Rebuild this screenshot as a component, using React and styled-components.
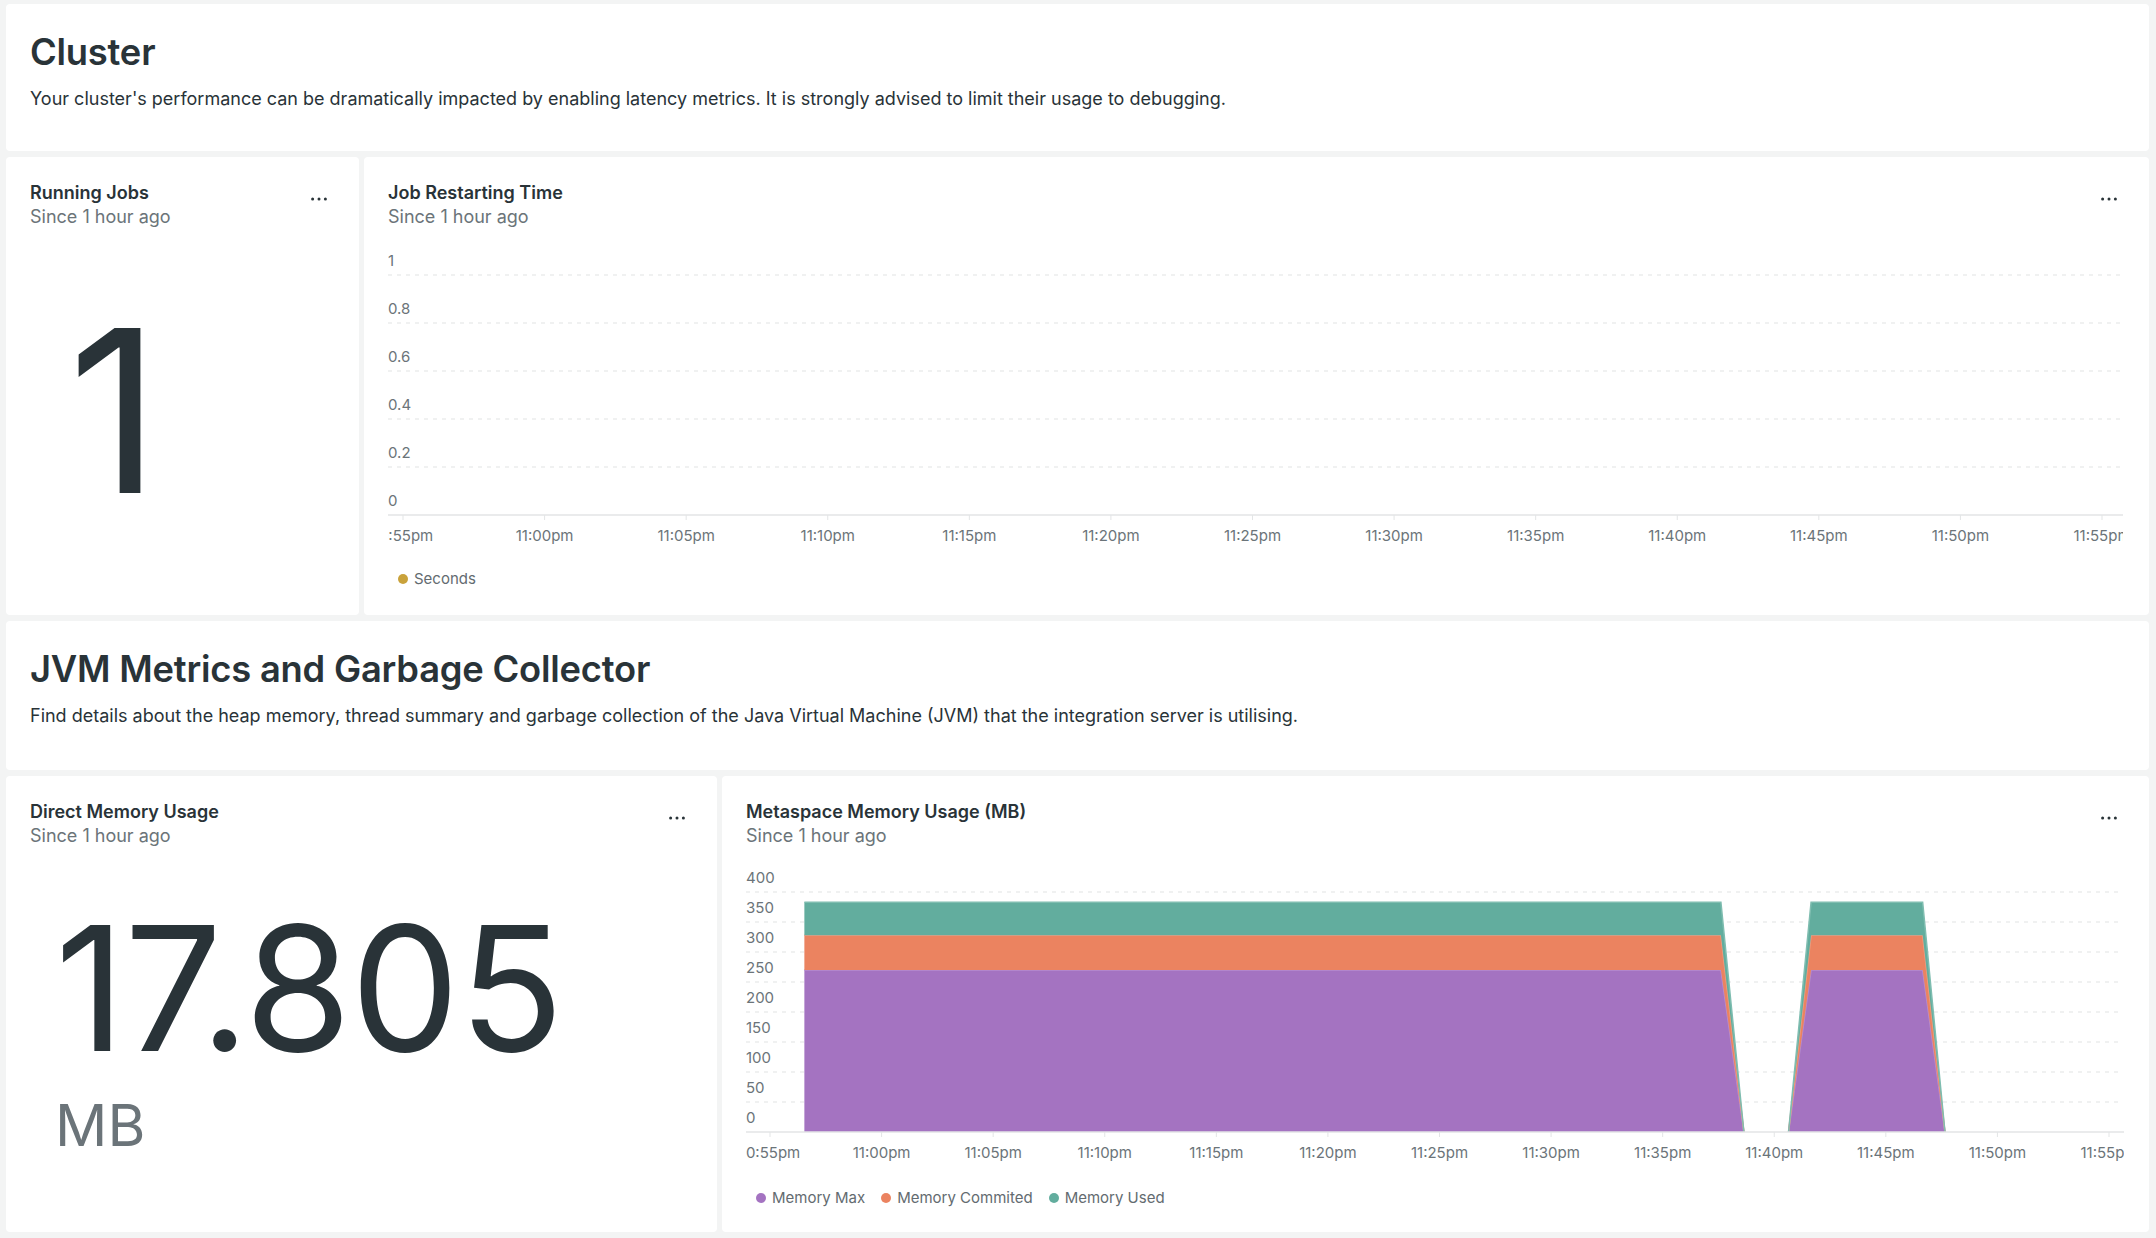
import React from 'react'
import styled, { createGlobalStyle } from 'styled-components'

const GlobalStyle = createGlobalStyle`
  html, body {
    margin: 0;
    background: #f3f4f4;
    font-family: Inter, "Noto Sans", sans-serif;
    color: #293338;
  }
`

const Grid = styled.div`
  display: grid;
  grid-template-columns: repeat(12, 1fr);
  grid-template-rows: 147px 458px 149px 456px;
  gap: 6px 5px;
  padding: 4px 7px 4px 6px;
`

const Panel = styled.section`
  grid-column: span ${p => p.span};
  background: #fff;
  border-radius: 4px;
  padding: 24px;
  display: flex;
  flex-direction: column;
  min-width: 0;
  box-sizing: border-box;
`

const SectionPanel = styled(Panel)`
  padding: 26px 24px;
`

const SectionTitle = styled.h2`
  margin: 0;
  font-size: 36.3px;
  line-height: 44px;
  font-weight: 600;
  letter-spacing: -0.2px;
`

const SectionText = styled.p`
  margin: 13px 0 0;
  font-size: 18px;
  line-height: 24px;
`

const WidgetHeader = styled.header`
  display: flex;
  justify-content: space-between;
  align-items: flex-start;
`

const WidgetTitle = styled.h3`
  margin: 0;
  font-size: 18px;
  line-height: 24px;
  font-weight: 600;
`

const WidgetSub = styled.div`
  font-size: 18px;
  line-height: 24px;
  color: #6b7479;
`

const MenuButton = styled.button`
  width: 32px;
  height: 32px;
  margin-top: 2px;
  border: 0;
  background: none;
  padding: 0;
  display: flex;
  align-items: center;
  justify-content: center;
  cursor: pointer;
`

const BillboardBody = styled.div`
  flex: 1;
  display: flex;
  flex-direction: column;
  justify-content: center;
  padding-left: ${p => p.inset}px;
`

const BigValue = styled.div`
  font-size: ${p => p.size}px;
  line-height: 1;
  font-weight: 400;
  color: #293338;
  letter-spacing: -1px;
`

const Unit = styled.div`
  margin-top: 21px;
  font-size: 58px;
  line-height: 1;
  color: #6b7479;
`

const ChartSvg = styled.svg`
  display: block;
  margin-top: 14px;
  font-family: Inter, "Noto Sans", sans-serif;
`

const Legend = styled.ul`
  list-style: none;
  margin: 21px 0 0;
  padding: 0 0 0 10px;
  display: flex;
  gap: 16px;
`

const LegendItem = styled.li`
  display: flex;
  align-items: center;
  gap: 6px;
  font-size: 15px;
  line-height: 20px;
  color: #636b70;

  &::before {
    content: '';
    width: 10px;
    height: 10px;
    border-radius: 50%;
    background: ${p => p.color};
  }
`

const TIMES = [
  '10:55pm', '11:00pm', '11:05pm', '11:10pm', '11:15pm', '11:20pm', '11:25pm',
  '11:30pm', '11:35pm', '11:40pm', '11:45pm', '11:50pm', '11:55pm'
]

function Dots () {
  return (
    <svg width='16' height='4' viewBox='0 0 16 4'>
      <circle cx='1.6' cy='2' r='1.5' fill='#293338' />
      <circle cx='8' cy='2' r='1.5' fill='#293338' />
      <circle cx='14.4' cy='2' r='1.5' fill='#293338' />
    </svg>
  )
}

function Header ({ title }) {
  return (
    <WidgetHeader>
      <div>
        <WidgetTitle>{title}</WidgetTitle>
        <WidgetSub>Since 1 hour ago</WidgetSub>
      </div>
      <MenuButton aria-label='More'><Dots /></MenuButton>
    </WidgetHeader>
  )
}

function TimeChart ({ width, yLabels, gridTop, gridStep, x0, x1, layers = [] }) {
  const height = 305
  const axisY = gridTop + gridStep * (yLabels.length - 1)
  const maxV = parseFloat(yLabels[0])
  const yAt = v => axisY - (v / maxV) * (axisY - gridTop)
  const xAt = t => x0 + ((x1 - x0) * t) / 60

  const shapes = []
  layers.forEach(seg => {
    let below = seg.points.map(() => 0)
    seg.series.forEach((s, si) => {
      const above = seg.points.map((p, i) => below[i] + p.v[si])
      const top = seg.points.map((p, i) => `${xAt(p.t)},${yAt(above[i])}`)
      const bottom = seg.points.map((p, i) => `${xAt(p.t)},${yAt(below[i])}`).reverse()
      shapes.push(
        <g key={`${seg.id}-${si}`}>
          <polygon points={[...top, ...bottom].join(' ')} fill={s.fill} />
          <polyline points={top.join(' ')} fill='none' stroke={s.line} strokeWidth='1.5' />
        </g>
      )
      below = above
    })
  })

  return (
    <ChartSvg width={width} height={height} viewBox={`0 0 ${width} ${height}`}>
      {yLabels.map((label, i) => {
        const y = gridTop + i * gridStep
        return (
          <g key={label}>
            <text x='0' y={y - 9} fontSize='15' fill='#6b7479'>{label}</text>
            {i < yLabels.length - 1 && (
              <line x1='0' x2={width - 3} y1={y} y2={y} stroke='#e1e3e4' strokeWidth='1.2' strokeDasharray='4 5' />
            )}
          </g>
        )
      })}
      {shapes}
      <line x1='0' x2={width} y1={axisY} y2={axisY} stroke='#e3e5e6' strokeWidth='1.5' />
      {TIMES.map((t, i) => {
        const x = x0 + ((x1 - x0) * i) / 12
        return (
          <g key={t}>
            <line x1={x} x2={x} y1={axisY} y2={axisY + 5} stroke='#e3e5e6' strokeWidth='1' />
            <text x={x} y={axisY + 26} fontSize='15' fill='#6b7479' textAnchor='middle'>{t}</text>
          </g>
        )
      })}
    </ChartSvg>
  )
}

const MEMORY_SERIES = [
  { name: 'Memory Max', fill: '#a473c1', line: '#b68dcf' },
  { name: 'Memory Commited', fill: '#eb8360', line: '#f09d80' },
  { name: 'Memory Used', fill: '#62ad9e', line: '#7fbdb0' }
]

const FULL = [270, 58, 55]
const ZERO = [0, 0, 0]

const MEMORY_DATA = [
  {
    id: 'a',
    series: MEMORY_SERIES,
    points: [
      { t: 1.54, v: FULL },
      { t: 42.61, v: FULL },
      { t: 43.64, v: ZERO }
    ]
  },
  {
    id: 'b',
    series: MEMORY_SERIES,
    points: [
      { t: 45.64, v: ZERO },
      { t: 46.65, v: FULL },
      { t: 51.65, v: FULL },
      { t: 52.65, v: ZERO }
    ]
  }
]

export default function App () {
  return (
    <>
      <GlobalStyle />
      <Grid>
        <SectionPanel span={12}>
          <SectionTitle>Cluster</SectionTitle>
          <SectionText>
            Your cluster's performance can be dramatically impacted by enabling latency metrics. It is strongly advised to limit their usage to debugging.
          </SectionText>
        </SectionPanel>

        <Panel span={2}>
          <Header title='Running Jobs' />
          <BillboardBody inset={38}>
            <BigValue size={227}>1</BigValue>
          </BillboardBody>
        </Panel>

        <Panel span={10}>
          <Header title='Job Restarting Time' />
          <TimeChart
            width={1735}
            yLabels={['1', '0.8', '0.6', '0.4', '0.2', '0']}
            gridTop={32}
            gridStep={48}
            x0={15}
            x1={1714}
          />
          <Legend>
            <LegendItem color='#c9a23b'>Seconds</LegendItem>
          </Legend>
        </Panel>

        <SectionPanel span={12}>
          <SectionTitle>JVM Metrics and Garbage Collector</SectionTitle>
          <SectionText>
            Find details about the heap memory, thread summary and garbage collection of the Java Virtual Machine (JVM) that the integration server is utilising.
          </SectionText>
        </SectionPanel>

        <Panel span={4}>
          <Header title='Direct Memory Usage' />
          <BillboardBody inset={25}>
            <BigValue size={173}>17.805</BigValue>
            <Unit>MB</Unit>
          </BillboardBody>
        </Panel>

        <Panel span={8}>
          <Header title='Metaspace Memory Usage (MB)' />
          <TimeChart
            width={1378}
            yLabels={['400', '350', '300', '250', '200', '150', '100', '50', '0']}
            gridTop={30}
            gridStep={30}
            x0={24}
            x1={1363}
            layers={MEMORY_DATA}
          />
          <Legend>
            {MEMORY_SERIES.map(s => (
              <LegendItem key={s.name} color={s.fill}>{s.name}</LegendItem>
            ))}
          </Legend>
        </Panel>
      </Grid>
    </>
  )
}
